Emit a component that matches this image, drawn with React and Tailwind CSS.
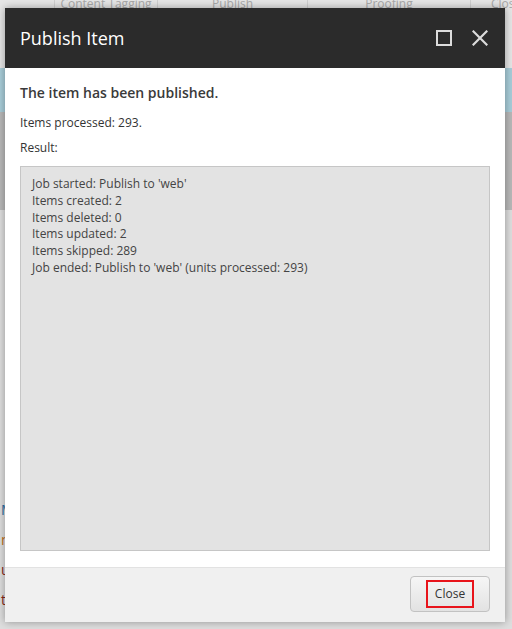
import React from "react";

export default function App() {
  const lines = [
    "Job started: Publish to 'web'",
    "Items created: 2",
    "Items deleted: 0",
    "Items updated: 2",
    "Items skipped: 289",
    "Job ended: Publish to 'web' (units processed: 293)",
  ];
  return (
    <div
      className="relative w-[512px] h-[629px] overflow-hidden bg-[#dedede]"
      style={{ fontFamily: '"Open Sans", "Liberation Sans", sans-serif' }}
    >
      {/* background page */}
      <div className="flex flex-col">
        <div className="h-[68px] bg-[#e6e6e6] flex text-[12px] text-[#a9a9a9] leading-[16px] whitespace-nowrap">
          <div className="w-[55px] shrink-0 border-r border-[#d0d0d0]" />
          <div className="w-[103px] shrink-0 border-r border-[#d0d0d0] text-center -mt-[4px]">Content Tagging</div>
          <div className="w-[150px] shrink-0 border-r border-[#d0d0d0] text-center -mt-[4px]">Publish</div>
          <div className="w-[163px] shrink-0 border-r border-[#d0d0d0] text-center -mt-[4px]">Proofing</div>
          <div className="shrink-0 pl-[20px] -mt-[4px]">Close</div>
        </div>
        <div className="h-[44px] bg-[#a8cdd9]" />
        <div className="h-[98px] bg-[#b8b8b8]" />
        <div className="flex flex-col pt-[292px] gap-[14px] text-[14px] leading-[16px]">
          <div className="text-[#2a6aa0] pl-[1px]">Modified</div>
          <div className="text-[#c07020] pl-[1px]">name</div>
          <div className="text-[#8a2a1a] pl-[1px]">updated</div>
          <div className="text-[#8a2a1a] pl-[1px]">title</div>
        </div>
      </div>

      {/* dialog */}
      <div className="absolute left-[5px] top-[8px] w-[500px] flex flex-col shadow-[0_0_8px_rgba(0,0,0,0.35)]">
        <div className="h-[60px] bg-[#2b2b2b] flex items-center justify-between pl-[15px] pr-[17px]">
          <span className="text-white text-[18px] leading-[24px]">Publish Item</span>
          <div className="flex items-center gap-[20px]">
            <svg width="16" height="16" viewBox="0 0 16 16">
              <rect x="1" y="1" width="14" height="14" fill="none" stroke="#dcdcdc" strokeWidth="2" />
            </svg>
            <svg width="16" height="16" viewBox="0 0 16 16">
              <path d="M1.5 1.5 L14.5 14.5 M14.5 1.5 L1.5 14.5" stroke="#dcdcdc" strokeWidth="2.2" strokeLinecap="square" />
            </svg>
          </div>
        </div>
        <div className="bg-white px-[15px] pt-[15px] pb-[16px] flex flex-col text-[#333]">
          <div className="text-[14px] leading-[20px] font-semibold text-[#3a3a3a]">The item has been published.</div>
          <div className="text-[12px] leading-[16px] mt-[12px]">Items processed: 293.</div>
          <div className="text-[12px] leading-[16px] mt-[9px]">Result:</div>
          <div className="mt-[10px] h-[385px] bg-[#e3e3e3] border border-[#c6c6c6] pl-[11px] pt-[9px] text-[12px] leading-[16.8px] text-[#444]">
            {lines.map((l) => (
              <div key={l}>{l}</div>
            ))}
          </div>
        </div>
        <div className="h-[55px] bg-[#f0f0f0] border-t border-[#e2e2e2] flex items-start justify-end pr-[15px] pt-[8px]">
          <button className="w-[80px] h-[36px] rounded-[4px] border border-[#c2c2c2] bg-gradient-to-b from-[#f6f6f6] to-[#e2e2e2] flex items-center justify-center">
            <span className="w-[48px] h-[28px] border-2 border-[#e8141b] flex items-center justify-center text-[12px] text-[#333]">
              Close
            </span>
          </button>
        </div>
      </div>
    </div>
  );
}
